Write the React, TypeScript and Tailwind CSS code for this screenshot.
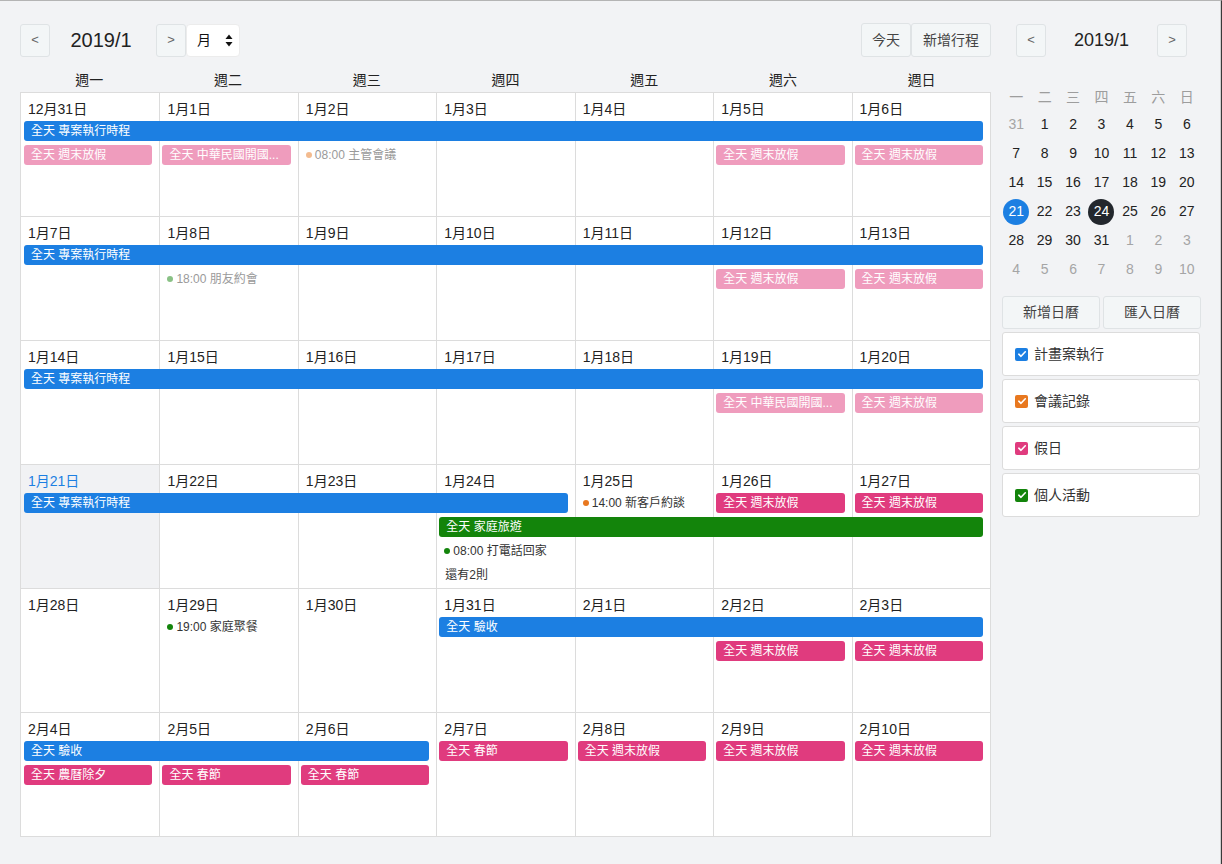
import React from "react";

const FONT = { fontFamily: '"Liberation Sans","Noto Sans CJK TC",sans-serif' };

const COL_START = ["", "col-start-1", "col-start-2", "col-start-3", "col-start-4", "col-start-5", "col-start-6", "col-start-7"];
const COL_SPAN = ["", "col-span-1", "col-span-2", "col-span-3", "col-span-4", "col-span-5", "col-span-6", "col-span-7"];
const ROW_START = ["", "row-start-1", "row-start-2", "row-start-3", "row-start-4", "row-start-5"];

type Ev =
  | { kind: "bar"; col: number; span: number; row: number; title: string; color: "blue" | "pink" | "green"; faded?: boolean }
  | { kind: "timed"; col: number; row: number; time: string; title: string; dot: "orange" | "green"; faded?: boolean }
  | { kind: "more"; col: number; row: number; text: string };

type Week = { days: string[]; events: Ev[]; todayCol?: number };

const weeks: Week[] = [
  {
    days: ["12月31日", "1月1日", "1月2日", "1月3日", "1月4日", "1月5日", "1月6日"],
    events: [
      { kind: "bar", col: 1, span: 7, row: 2, title: "專案執行時程", color: "blue" },
      { kind: "bar", col: 1, span: 1, row: 3, title: "週末放假", color: "pink", faded: true },
      { kind: "bar", col: 2, span: 1, row: 3, title: "中華民國開國...", color: "pink", faded: true },
      { kind: "timed", col: 3, row: 3, time: "08:00", title: "主管會議", dot: "orange", faded: true },
      { kind: "bar", col: 6, span: 1, row: 3, title: "週末放假", color: "pink", faded: true },
      { kind: "bar", col: 7, span: 1, row: 3, title: "週末放假", color: "pink", faded: true },
    ],
  },
  {
    days: ["1月7日", "1月8日", "1月9日", "1月10日", "1月11日", "1月12日", "1月13日"],
    events: [
      { kind: "bar", col: 1, span: 7, row: 2, title: "專案執行時程", color: "blue" },
      { kind: "timed", col: 2, row: 3, time: "18:00", title: "朋友約會", dot: "green", faded: true },
      { kind: "bar", col: 6, span: 1, row: 3, title: "週末放假", color: "pink", faded: true },
      { kind: "bar", col: 7, span: 1, row: 3, title: "週末放假", color: "pink", faded: true },
    ],
  },
  {
    days: ["1月14日", "1月15日", "1月16日", "1月17日", "1月18日", "1月19日", "1月20日"],
    events: [
      { kind: "bar", col: 1, span: 7, row: 2, title: "專案執行時程", color: "blue" },
      { kind: "bar", col: 6, span: 1, row: 3, title: "中華民國開國...", color: "pink", faded: true },
      { kind: "bar", col: 7, span: 1, row: 3, title: "週末放假", color: "pink", faded: true },
    ],
  },
  {
    days: ["1月21日", "1月22日", "1月23日", "1月24日", "1月25日", "1月26日", "1月27日"],
    todayCol: 1,
    events: [
      { kind: "bar", col: 1, span: 4, row: 2, title: "專案執行時程", color: "blue" },
      { kind: "timed", col: 5, row: 2, time: "14:00", title: "新客戶約談", dot: "orange" },
      { kind: "bar", col: 6, span: 1, row: 2, title: "週末放假", color: "pink" },
      { kind: "bar", col: 7, span: 1, row: 2, title: "週末放假", color: "pink" },
      { kind: "bar", col: 4, span: 4, row: 3, title: "家庭旅遊", color: "green" },
      { kind: "timed", col: 4, row: 4, time: "08:00", title: "打電話回家", dot: "green" },
      { kind: "more", col: 4, row: 5, text: "還有2則" },
    ],
  },
  {
    days: ["1月28日", "1月29日", "1月30日", "1月31日", "2月1日", "2月2日", "2月3日"],
    events: [
      { kind: "timed", col: 2, row: 2, time: "19:00", title: "家庭聚餐", dot: "green" },
      { kind: "bar", col: 4, span: 4, row: 2, title: "驗收", color: "blue" },
      { kind: "bar", col: 6, span: 1, row: 3, title: "週末放假", color: "pink" },
      { kind: "bar", col: 7, span: 1, row: 3, title: "週末放假", color: "pink" },
    ],
  },
  {
    days: ["2月4日", "2月5日", "2月6日", "2月7日", "2月8日", "2月9日", "2月10日"],
    events: [
      { kind: "bar", col: 1, span: 3, row: 2, title: "驗收", color: "blue" },
      { kind: "bar", col: 4, span: 1, row: 2, title: "春節", color: "pink" },
      { kind: "bar", col: 5, span: 1, row: 2, title: "週末放假", color: "pink" },
      { kind: "bar", col: 6, span: 1, row: 2, title: "週末放假", color: "pink" },
      { kind: "bar", col: 7, span: 1, row: 2, title: "週末放假", color: "pink" },
      { kind: "bar", col: 1, span: 1, row: 3, title: "農曆除夕", color: "pink" },
      { kind: "bar", col: 2, span: 1, row: 3, title: "春節", color: "pink" },
      { kind: "bar", col: 3, span: 1, row: 3, title: "春節", color: "pink" },
    ],
  },
];

const BAR_BG: Record<string, string> = {
  blue: "bg-[#1c7fe2]",
  pink: "bg-[#e03b7e]",
  green: "bg-[#13840b]",
};
const DOT_BG: Record<string, string> = {
  orange: "bg-[#e8781f]",
  green: "bg-[#13840b]",
};

function EventItem({ ev }: { ev: Ev }) {
  const place = `${COL_START[ev.col]} ${ROW_START[ev.row]}`;
  if (ev.kind === "bar") {
    return (
      <div
        className={`${place} ${COL_SPAN[ev.span]} ${BAR_BG[ev.color]} ${ev.faded ? "opacity-50" : ""} self-start h-[20px] rounded-[3px] ml-[3px] mr-[7px] pl-[7px] text-[12px] leading-[20px] text-white whitespace-nowrap z-10`}
      >
        全天 {ev.title}
      </div>
    );
  }
  if (ev.kind === "timed") {
    return (
      <div
        className={`${place} col-span-1 self-start h-[20px] flex items-center pl-[8px] text-[12px] leading-[20px] whitespace-nowrap z-10 ${ev.faded ? "text-[#9a9a9a]" : "text-[#333]"}`}
      >
        <span className={`inline-block w-[6px] h-[6px] rounded-full mr-[3px] ${DOT_BG[ev.dot]} ${ev.faded ? "opacity-50" : ""}`} />
        {ev.time} {ev.title}
      </div>
    );
  }
  return (
    <div className={`${place} col-span-1 self-start h-[20px] pl-[9px] text-[12px] leading-[20px] text-[#333] z-10`}>{ev.text}</div>
  );
}

function WeekRow({ week }: { week: Week }) {
  return (
    <div className="grid grid-cols-7 grid-rows-[28px_24px_24px_24px_1fr] h-[124px] border-b border-[#dcdcdc]">
      {week.days.map((d, i) => {
        const isToday = week.todayCol === i + 1;
        return (
          <div
            key={d}
            className={`${COL_START[i + 1]} row-start-1 row-span-5 ${i > 0 ? "border-l border-[#dcdcdc]" : ""} ${isToday ? "bg-[#f1f2f4]" : "bg-white"}`}
          >
            <div className={`pl-[7px] pt-[6px] text-[14px] leading-[20px] ${isToday ? "text-[#1c7fe2]" : "text-[#222]"}`}>{d}</div>
          </div>
        );
      })}
      {week.events.map((ev, i) => (
        <EventItem key={i} ev={ev} />
      ))}
    </div>
  );
}

function NavBtn({ children }: { children: React.ReactNode }) {
  return (
    <div className="w-[30px] h-[33px] flex items-center justify-center rounded-[3px] border border-[#dfe3e5] bg-[#f3f6f7] text-[#666] text-[13px]">
      {children}
    </div>
  );
}

function Check({ color }: { color: string }) {
  return (
    <span className={`w-[13px] h-[13px] rounded-[2px] flex items-center justify-center ${color}`}>
      <svg width="10" height="10" viewBox="0 0 10 10">
        <path d="M1.8 5.2 L4 7.3 L8.3 2.8" stroke="white" strokeWidth="1.6" fill="none" strokeLinecap="round" strokeLinejoin="round" />
      </svg>
    </span>
  );
}

const mini: { n: number; dim?: boolean; sel?: "blue" | "dark" }[][] = [
  [{ n: 31, dim: true }, { n: 1 }, { n: 2 }, { n: 3 }, { n: 4 }, { n: 5 }, { n: 6 }],
  [{ n: 7 }, { n: 8 }, { n: 9 }, { n: 10 }, { n: 11 }, { n: 12 }, { n: 13 }],
  [{ n: 14 }, { n: 15 }, { n: 16 }, { n: 17 }, { n: 18 }, { n: 19 }, { n: 20 }],
  [{ n: 21, sel: "blue" }, { n: 22 }, { n: 23 }, { n: 24, sel: "dark" }, { n: 25 }, { n: 26 }, { n: 27 }],
  [{ n: 28 }, { n: 29 }, { n: 30 }, { n: 31 }, { n: 1, dim: true }, { n: 2, dim: true }, { n: 3, dim: true }],
  [{ n: 4, dim: true }, { n: 5, dim: true }, { n: 6, dim: true }, { n: 7, dim: true }, { n: 8, dim: true }, { n: 9, dim: true }, { n: 10, dim: true }],
];

export default function App() {
  return (
    <div style={FONT} className="w-[1222px] h-[864px] bg-[#f2f3f5] border-t border-[#b4b4b4] border-r border-r-[#3a3a3a] overflow-hidden">
      <div className="h-full border-r border-r-[#cfcfcf] flex pl-[20px] pt-[22px]">
        {/* Main calendar */}
        <div className="w-[971px] flex flex-col">
          <div className="flex items-center h-[34px]">
            <NavBtn>&lt;</NavBtn>
            <div className="w-[102px] text-center text-[20px] text-[#222]">2019/1</div>
            <div className="ml-[4px]">
              <NavBtn>&gt;</NavBtn>
            </div>
            <div className="w-[54px] h-[33px] bg-white rounded-[4px] border border-[#ececec] flex items-center justify-between pl-[10px] pr-[6px] text-[14px] text-[#111]">
              <span>月</span>
              <svg width="8" height="13" viewBox="0 0 8 13">
                <path d="M4 0.5 L7.5 5 L0.5 5 Z" fill="#111" />
                <path d="M4 12.5 L7.5 8 L0.5 8 Z" fill="#111" />
              </svg>
            </div>
            <div className="ml-auto flex">
              <div className="w-[50px] h-[34px] flex items-center justify-center rounded-[3px] border border-[#dfe3e5] bg-[#f3f6f7] text-[14px] text-[#444]">今天</div>
              <div className="w-[80px] h-[34px] flex items-center justify-center rounded-[3px] border border-[#dfe3e5] bg-[#f3f6f7] text-[14px] text-[#444]">新增行程</div>
            </div>
          </div>
          <div className="grid grid-cols-7 mt-[11px] h-[24px] items-center">
            {["週一", "週二", "週三", "週四", "週五", "週六", "週日"].map((w) => (
              <div key={w} className="text-center text-[14px] text-[#222]">{w}</div>
            ))}
          </div>
          <div className="border-t border-l border-r border-[#dcdcdc]">
            {weeks.map((w, i) => (
              <WeekRow key={i} week={w} />
            ))}
          </div>
        </div>

        {/* Side panel */}
        <div className="ml-[11px] w-[199px] flex flex-col">
          <div className="flex items-center h-[34px] px-[14px]">
            <NavBtn>&lt;</NavBtn>
            <div className="flex-1 text-center text-[18px] text-[#222]">2019/1</div>
            <NavBtn>&gt;</NavBtn>
          </div>
          <div className="mt-[27px] grid grid-cols-7">
            {["一", "二", "三", "四", "五", "六", "日"].map((d) => (
              <div key={d} className="h-[26px] flex items-center justify-center text-[14px] text-[#9d9d9d]">{d}</div>
            ))}
            {mini.flat().map((c, i) => (
              <div key={i} className="h-[29px] flex items-center justify-center">
                <span
                  className={`w-[26px] h-[26px] rounded-full flex items-center justify-center text-[14px] ${
                    c.sel === "blue"
                      ? "bg-[#1c7fe2] text-white"
                      : c.sel === "dark"
                      ? "bg-[#23272d] text-white"
                      : c.dim
                      ? "text-[#a5a5a5]"
                      : "text-[#222]"
                  }`}
                >
                  {c.n}
                </span>
              </div>
            ))}
          </div>
          <div className="mt-[12px] flex gap-[3px]">
            <div className="flex-1 h-[33px] flex items-center justify-center rounded-[3px] border border-[#dfe3e5] bg-[#f3f6f7] text-[14px] text-[#444]">新增日曆</div>
            <div className="flex-1 h-[33px] flex items-center justify-center rounded-[3px] border border-[#dfe3e5] bg-[#f3f6f7] text-[14px] text-[#444]">匯入日曆</div>
          </div>
          <div className="mt-[3px] flex flex-col gap-[3px] pr-[1px]">
            {[
              { c: "bg-[#1c7fe2]", t: "計畫案執行" },
              { c: "bg-[#e8781f]", t: "會議記錄" },
              { c: "bg-[#e03b7e]", t: "假日" },
              { c: "bg-[#13840b]", t: "個人活動" },
            ].map((x) => (
              <div key={x.t} className="h-[44px] bg-white border border-[#dcdcdc] rounded-[3px] flex items-center pl-[12px] gap-[6px] text-[14px] text-[#333]">
                <Check color={x.c} />
                <span>{x.t}</span>
              </div>
            ))}
          </div>
        </div>
      </div>
    </div>
  );
}
